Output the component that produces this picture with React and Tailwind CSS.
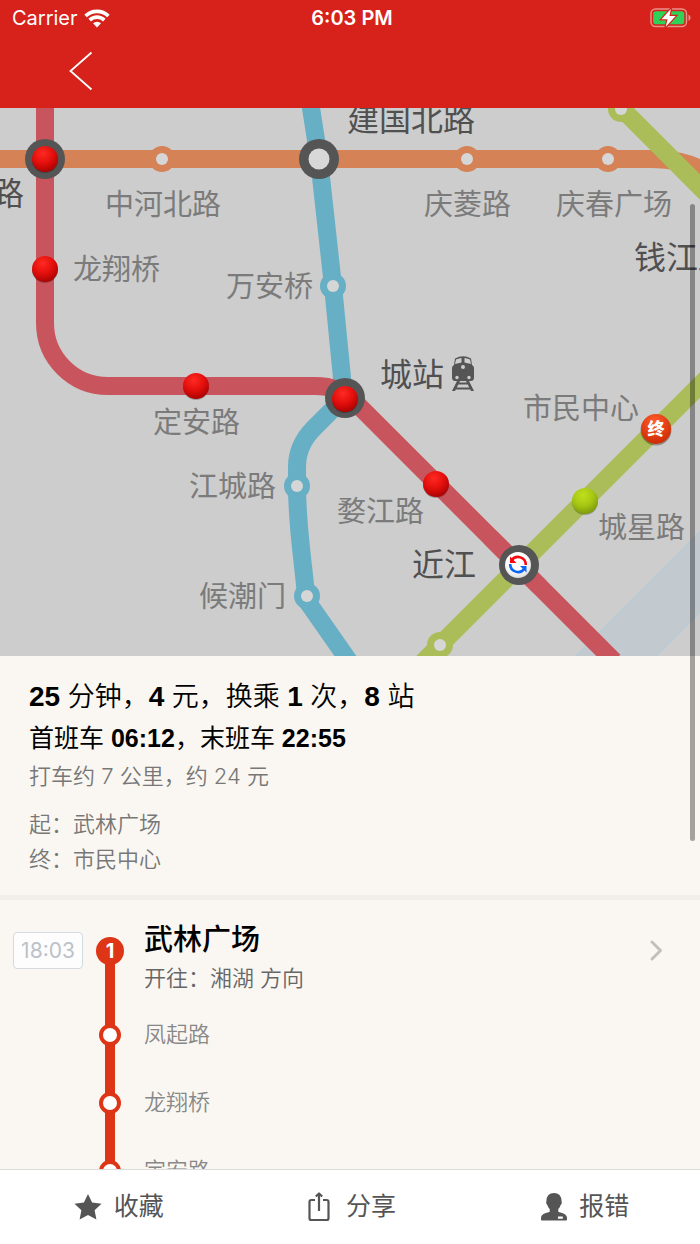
import React from 'react';
import clsx from 'clsx';

const LINE_RED = '#c8555d';
const LINE_BLUE = '#66afc5';
const LINE_ORANGE = '#d48256';
const LINE_GREEN = '#abbd58';

const stations = [
    { x: 162, y: 51, color: LINE_ORANGE },
    { x: 467, y: 51, color: LINE_ORANGE },
    { x: 608, y: 51, color: LINE_ORANGE },
    { x: 333, y: 178, color: LINE_BLUE },
    { x: 297, y: 378, color: LINE_BLUE },
    { x: 307, y: 488, color: LINE_BLUE },
    { x: 440, y: 537, color: LINE_GREEN },
    { x: 621, y: 1, color: LINE_GREEN }
];

const interchanges = [
    { x: 45, y: 51 },
    { x: 319, y: 51 },
    { x: 345, y: 290 },
    { x: 519, y: 457 }
];

const routeStops = [
    { x: 45, y: 51, fill: 'url(#ballRed)' },
    { x: 45, y: 161, fill: 'url(#ballRed)' },
    { x: 196, y: 278, fill: 'url(#ballRed)' },
    { x: 345, y: 291, fill: 'url(#ballRed)' },
    { x: 436, y: 376, fill: 'url(#ballRed)' },
    { x: 585, y: 393, fill: 'url(#ballGreen)' }
];

const labels = [
    { text: '中河北路', x: 105, y: 107 },
    { text: '庆菱路', x: 424, y: 107 },
    { text: '庆春广场', x: 556, y: 107 },
    { text: '龙翔桥', x: 73, y: 172 },
    { text: '万安桥', x: 226, y: 189 },
    { text: '定安路', x: 153, y: 325 },
    { text: '江城路', x: 189, y: 389 },
    { text: '婺江路', x: 337, y: 414 },
    { text: '候潮门', x: 199, y: 499 },
    { text: '市民中心', x: 523, y: 311 },
    { text: '城星路', x: 598, y: 430 }
];

const majorLabels = [
    { text: '建国北路', x: 347, y: 23 },
    { text: '路', x: -8, y: 97 },
    { text: '钱江路', x: 634, y: 161 },
    { text: '城站', x: 380, y: 278 },
    { text: '近江', x: 412, y: 468 }
];

const stops = ['凤起路', '龙翔桥', '定安路'];

const WifiIcon = () => (
    <svg width="26" height="19" viewBox="0 0 26 19" aria-hidden="true">
        <g fill="none" stroke="#fff" strokeWidth="3.7">
            <path d="M1.6 7A16.2 16.2 0 0 1 24.4 7" />
            <path d="M5.700 11.100A10.400 10.400 0 0 1 20.300 11.100" />
        </g>
        <path d="M9 14.300a5.700 5.700 0 0 1 8 0l-4 4.200z" fill="#fff" />
    </svg>
);

const BatteryIcon = () => (
    <svg width="42" height="20" viewBox="0 0 42 20" aria-hidden="true">
        <rect x="1" y="1" width="35.5" height="17.5" rx="4.5" fill="none" stroke="#fff" strokeOpacity=".5" strokeWidth="1.4" />
        <path d="M38.5 6.8v6c1.3-.5 2-1.6 2-3s-.7-2.500-2-3z" fill="#fff" fillOpacity=".5" />
        <rect x="3.200" y="3.200" width="31" height="13" rx="2.500" fill="#30d158" />
        <path d="M20.800 1L11.500 11.200h6L15.800 18.800 25.700 8h-6.200z" fill="#fff" stroke="#d6221a" strokeWidth="2.400" paintOrder="stroke" />
    </svg>
);

const Header = () => (
    <header className="shrink-0 bg-[#d6221a] pb-[2px] text-white">
        <div className="grid h-9 grid-cols-[1fr_auto_1fr] items-center pr-2 pl-3 font-[Inter,sans-serif] text-xl leading-6">
            <div className="flex items-center gap-[6px]">
                <span>Carrier</span>
                <WifiIcon />
            </div>
            <div className="font-semibold">6:03 PM</div>
            <div className="flex justify-end">
                <BatteryIcon />
            </div>
        </div>
        <div className="flex h-[70px] items-center px-[68px]">
            <button type="button" aria-label="返回" className="cursor-pointer">
                <svg width="26" height="40" viewBox="0 0 26 40">
                    <path d="M23.500 1.500L2.500 20l21 18.500" fill="none" stroke="#fff" strokeWidth="1.800" />
                </svg>
            </button>
        </div>
    </header>
);

const RouteMap = () => (
    <svg viewBox="0 0 700 548" className="block w-full bg-[#cdcdcd]" role="img" aria-label="线路图">
        <defs>
            <radialGradient id="ballRed" cx=".42" cy=".28" r=".72">
                <stop offset="0" stopColor="#ff2a22" />
                <stop offset=".55" stopColor="#e30f0c" />
                <stop offset="1" stopColor="#ab0303" />
            </radialGradient>
            <radialGradient id="ballGreen" cx=".42" cy=".28" r=".72">
                <stop offset="0" stopColor="#bfe01c" />
                <stop offset=".55" stopColor="#a6c714" />
                <stop offset="1" stopColor="#7f9c0b" />
            </radialGradient>
            <radialGradient id="ballEnd" cx=".45" cy=".25" r=".75">
                <stop offset="0" stopColor="#ff5a2a" />
                <stop offset="1" stopColor="#cc2c04" />
            </radialGradient>
            <radialGradient id="ballWhite" cx=".45" cy=".35" r=".65">
                <stop offset=".6" stopColor="#fff" />
                <stop offset="1" stopColor="#dcdcdc" />
            </radialGradient>
        </defs>

        {/* River */}
        <path d="M574 550L705 419V499L654 550z" fill="#c2cad0" stroke="#b9cbd4" strokeWidth="1.500" />

        {/* Lines */}
        <g fill="none" strokeWidth="18">
            <path d="M-5 51H650C672 51 688 54 706 64" stroke={LINE_ORANGE} />
            <path d="M310 -5L311 0L319 51L333 178L344 290L314 320C302 332 297 345 297 359V378C297 420 304 460 306 488C306 490 307 493 309 496L351 556" stroke={LINE_BLUE} />
            <path d="M45 -5V215A63 63 0 0 0 108 278H315C333 278 343 283 354 293L614 553" stroke={LINE_RED} />
            <path d="M616 -5L710 89" stroke={LINE_GREEN} />
            <path d="M707 270L422 555" stroke={LINE_GREEN} />
            <path d="M490 429L540 479" stroke={LINE_RED} />
        </g>

        {stations.map((s) => (
            <g key={`${s.x}-${s.y}`}>
                <circle cx={s.x} cy={s.y} r="13" fill={s.color} />
                <circle cx={s.x} cy={s.y} r="6" fill="#d6d6d6" />
            </g>
        ))}
        {interchanges.map((s) => (
            <g key={`${s.x}-${s.y}`}>
                <circle cx={s.x} cy={s.y} r="20" fill="#555" />
                <circle cx={s.x} cy={s.y} r="10.500" fill="#d8d8d8" />
            </g>
        ))}
        {routeStops.map((s) => (
            <g key={`${s.x}-${s.y}`}>
                <circle cx={s.x} cy={s.y + 1} r="13" fill="#000" fillOpacity=".25" />
                <circle cx={s.x} cy={s.y} r="13" fill={s.fill} />
            </g>
        ))}

        {/* Transfer marker */}
        <circle cx="518" cy="457" r="13" fill="url(#ballWhite)" />
        <g fill="none" strokeWidth="2.600">
            <path d="M511.500 452.500A7.800 7.800 0 0 1 525.800 457" stroke="#f50a14" />
            <path d="M524.500 460.500A7.800 7.800 0 0 1 510.200 456" stroke="#0a66f5" />
        </g>
        <path d="M510 448.500v6.500h6.500z" fill="#f50a14" />
        <path d="M526.500 464.500v-6.500h-6.500z" fill="#0a66f5" />

        {/* Destination marker */}
        <circle cx="656" cy="322" r="15.500" fill="#000" fillOpacity=".3" />
        <circle cx="656" cy="321" r="15" fill="url(#ballEnd)" />
        <text x="656" y="327" textAnchor="middle" fill="#fff" className="text-[17px] font-black">终</text>

        {/* Railway station icon */}
        <g fill="#555">
            <path d="M455 250.500Q463 246 471 250.500L472 257Q474 258 474 260V269.500Q474 273 470.500 273H455.500Q452 273 452 269.500V260Q452 258 454 257z" />
            <path d="M457 273h3l-5 10h-3zM466 273h3l5 10h-3zM457 274.500h12v2h-12zM455 279.500h16v2h-16z" />
        </g>
        <g fill="#cdcdcd">
            <path d="M456 251.500Q459 250 461.500 250V254.500L455 256zM470 251.500Q467 250 464.500 250V254.500L471 256z" />
            <circle cx="463" cy="259" r="2" />
            <circle cx="457" cy="269.500" r="1.700" />
            <circle cx="469" cy="269.500" r="1.700" />
        </g>

        <g fill="#7b7b7b" className="text-[29px]">
            {labels.map((l) => (
                <text key={l.text} x={l.x} y={l.y}>{l.text}</text>
            ))}
        </g>
        <g fill="#505050" className="text-[32px]">
            {majorLabels.map((l) => (
                <text key={l.text} x={l.x} y={l.y}>{l.text}</text>
            ))}
        </g>
    </svg>
);

const Summary = () => (
    <section className="border-b-[5px] border-[#f2efea] px-[29px] pt-5 pb-[18px]">
        <h1 className="text-[27px] leading-[41px] font-[350] text-black">
            <b className="text-[28px] font-bold">25</b> 分钟，<b className="text-[28px] font-bold">4</b> 元，换乘 <b className="text-[28px] font-bold">1</b> 次，<b className="text-[28px] font-bold">8</b> 站
        </h1>
        <p className="text-[25px] leading-[41px] text-black">
            首班车 <b className="font-bold">06:12</b>，末班车 <b className="font-bold">22:55</b>
        </p>
        <div className="font-[Inter,'Noto_Sans_CJK_SC',sans-serif] text-[22px] leading-[35px] font-[350] text-[#777]">
            <p>打车约 7 公里，约 24 元</p>
            <p className="mt-[13px]">起：武林广场</p>
            <p>终：市民中心</p>
        </div>
    </section>
);

const Itinerary = () => (
    <section>
        <div className="flex h-[101px] items-center">
            <div className="w-24 shrink-0 pl-[13px]">
                <time className="flex h-[37px] w-[70px] items-center justify-center rounded-sm border border-[#d3dae0] bg-[#fdfdfd] font-[Inter,sans-serif] text-[21px] text-[#bbc2c9]">18:03</time>
            </div>
            <div className="flex w-7 shrink-0 flex-col items-center self-stretch">
                <span className="flex-1" />
                <span className="z-10 -my-1 flex size-7 items-center justify-center rounded-full bg-[#dd3515] font-[Inter,sans-serif] text-xl font-bold text-white">1</span>
                <span className="w-[10px] flex-1 bg-[#dd3515]" />
            </div>
            <div className="flex-1 self-start pt-5 pl-5">
                <h2 className="text-[29px] leading-10 font-medium text-black">武林广场</h2>
                <p className="text-[22px] leading-[38px] font-[350] text-[#666]">开往：湘湖 方向</p>
            </div>
            <button type="button" aria-label="展开" className="mr-9 cursor-pointer">
                <svg width="16" height="24" viewBox="0 0 16 24">
                    <path d="M4 3L12.500 11.500l-8.500 8.500" fill="none" stroke="#c2c0bd" strokeWidth="3" strokeLinecap="round" strokeLinejoin="round" />
                </svg>
            </button>
        </div>
        <ol>
            {stops.map((stop) => (
                <li key={stop} className="flex h-[68px] items-center pl-24">
                    <div className="flex w-7 shrink-0 flex-col items-center self-stretch">
                        <span className="w-[10px] flex-1 bg-[#dd3515]" />
                        <span className="z-10 -my-1 size-[22px] rounded-full border-4 border-[#dd3515] bg-white" />
                        <span className="w-[10px] flex-1 bg-[#dd3515]" />
                    </div>
                    <span className="pl-5 text-[22px] leading-8 font-[350] text-[#888]">{stop}</span>
                </li>
            ))}
        </ol>
    </section>
);

const StarIcon = () => (
    <svg width="28" height="28" viewBox="0 0 28 28" aria-hidden="true">
        <path d="M14 1l4.100 8.600 9.400 1.200-6.900 6.500 1.800 9.300L14 22l-8.400 4.600 1.800-9.300L.5 10.800l9.400-1.200z" fill="#555" />
    </svg>
);

const ShareIcon = () => (
    <svg width="22" height="30" viewBox="0 0 22 30" aria-hidden="true">
        <g fill="none" stroke="#555" strokeWidth="2.200" strokeLinejoin="round">
            <path d="M7 8H3.300Q1.500 8 1.500 9.800V26.200Q1.500 28 3.300 28H18.700Q20.500 28 20.500 26.200V9.800Q20.500 8 18.700 8H15" />
            <path d="M11 19V2M7.800 4.500L11 1.500 14.200 4.500" />
        </g>
    </svg>
);

const PersonIcon = () => (
    <svg width="26" height="28" viewBox="0 0 26 28" aria-hidden="true">
        <path fillRule="evenodd" d="M13 0c4.600 0 7.500 3 7.500 7.500 0 .8.400 1 .3 2.200-.1 1.300-.8 1.600-1.100 2.400-.5 1.600-1.300 3-2.400 4v2.600c2.200 1.200 8.700 1.700 8.700 6.300v1.500q0 1-1 1H1q-1 0-1-1V25c0-4.600 6.500-5.100 8.700-6.300v-2.600c-1.100-1-1.900-2.400-2.400-4-.3-.8-1-1.100-1.100-2.400-.1-1.200.3-1.400.3-2.200C5.500 3 8.400 0 13 0zM17 23.500v2.300h4.800v-2.300z" fill="#555" />
    </svg>
);

const actions = [
    { label: '收藏', Icon: StarIcon, gap: 'gap-3' },
    { label: '分享', Icon: ShareIcon, gap: 'gap-4' },
    { label: '报错', Icon: PersonIcon, gap: 'gap-3' }
];

const ActionBar = () => (
    <footer className="grid h-[75px] shrink-0 grid-cols-3 border-t border-[#dcdcdc] bg-white">
        {actions.map(({ label, Icon, gap }) => (
            <button key={label} type="button" className={clsx('flex cursor-pointer items-center justify-center pl-1 text-[25px] text-[#555]', gap)}>
                <Icon />
                {label}
            </button>
        ))}
    </footer>
);

const App = () => (
    <div className="flex h-screen flex-col bg-[#faf7f2] font-['Liberation_Sans','Noto_Sans_CJK_SC',sans-serif]" lang="zh-CN">
        <Header />
        <div className="relative min-h-0 flex-1">
            <main className="h-full overflow-y-auto [scrollbar-width:none]">
                <RouteMap />
                <Summary />
                <Itinerary />
            </main>
            {/* Scroll indicator */}
            <div className="pointer-events-none absolute top-24 right-[5px] z-20 h-3/5 w-[5px] rounded-full bg-black/35" />
        </div>
        <ActionBar />
    </div>
);

export default App;
